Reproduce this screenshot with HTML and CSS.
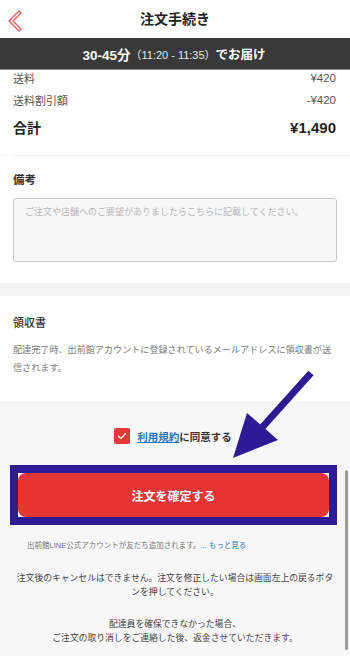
FILE: index.html
```html
<!DOCTYPE html>
<html lang="ja">
<head>
<meta charset="utf-8">
<link rel="stylesheet" href="styles.css">
</head>
<body>
<div class="page">
  <header class="topbar">
    <svg class="back" width="24" height="38" viewBox="0 0 24 38"><polygon points="17,11 19,13 11,21 19,29 17,31 7,21" fill="none" stroke="#e05a5a" stroke-width="1.2" stroke-linejoin="round"/></svg>
    <h1>注文手続き</h1>
  </header>
  <div class="eta"><b>30-45分</b><span>（11:20 - 11:35）</span><b>でお届け</b></div>
  <section class="summary">
    <div class="row r1"><span>送料</span><span>¥420</span></div>
    <div class="row r2"><span>送料割引額</span><span>-¥420</span></div>
    <div class="row total"><span>合計</span><span>¥1,490</span></div>
  </section>
  <div class="divider"></div>
  <section class="notes">
    <h2>備考</h2>
    <div class="textarea">ご注文や店舗へのご要望がありましたらこちらに記載してください。</div>
  </section>
  <div class="band"></div>
  <section class="receipt">
    <h2>領収書</h2>
    <p>配達完了時、出前館アカウントに登録されているメールアドレスに領収書が送信されます。</p>
  </section>
  <section class="confirm">
    <div class="agree">
      <span class="check"><svg width="16" height="16" viewBox="0 0 16 16"><path d="M4.5 8.2 L7 10.5 L11.5 5.5" fill="none" stroke="#fff" stroke-width="1.4" stroke-linecap="round" stroke-linejoin="round"/></svg></span>
      <a class="terms">利用規約</a><span>に同意する</span>
    </div>
    <div class="highlight">
      <div class="btn">注文を確定する</div>
    </div>
    <p class="line">出前館LINE公式アカウントが友だち追加されます。<span class="more">... もっと見る</span></p>
    <p class="info">注文後のキャンセルはできません。注文を修正したい場合は画面左上の戻るボタンを押してください。</p>
    <p class="info second">配達員を確保できなかった場合、<br>ご注文の取り消しをご連絡した後、返金させていただきます。</p>
  </section>
  <svg class="arrow" width="350" height="656" viewBox="0 0 350 656">
    <line x1="311" y1="373" x2="258" y2="432" stroke="#2f1a96" stroke-width="7"/>
    <polygon points="233,458 247,413 278,440" fill="#2f1a96"/>
  </svg>
  <div class="scrollbar"></div>
</div>
</body>
</html>
```
FILE: styles.css
```css
* { box-sizing: border-box; margin: 0; padding: 0; }
html, body { width: 350px; height: 656px; overflow: hidden; }
body {
  font-family: "Liberation Sans", "Noto Sans CJK JP", sans-serif;
  color: #333;
  background: #f7f7f7;
}
.page { position: relative; width: 350px; height: 656px; overflow: hidden; }
.topbar {
  height: 38px;
  background: #fff;
  display: flex;
  align-items: center;
  justify-content: center;
  position: relative;
}
.back { position: absolute; left: 2px; top: 0; }
.topbar h1 { font-size: 14px; font-weight: 700; color: #222; line-height: 38px; }
.eta {
  height: 32px;
  background: #393939;
  border-bottom: 1px solid #8a8a8a;
  color: #fff;
  display: flex;
  align-items: center;
  justify-content: center;
  padding-right: 2px;
}
.eta b { font-weight: 700; font-size: 12.5px; }
.eta b:first-child { font-size: 13.5px; }
.eta span { font-size: 11px; font-weight: 400; color: #e8e8e8; }
.summary { background: #fff; padding: 0 14px 18px 13px; }
.row { display: flex; justify-content: space-between; align-items: center; font-size: 11px; color: #555; }
.row span:last-child { font-size: 11.5px; }
.r1 { height: 15px; }
.r2 { height: 16px; margin-top: 7px; }
.total { height: 20px; margin-top: 9px; font-size: 14px; font-weight: 700; color: #222; }
.total span:last-child { font-size: 15px; }
.divider { height: 1px; background: #ececec; margin-left: 13px; }
.notes { background: #fff; padding: 14px 13px 21px 13px; }
.notes h2 { font-size: 11.5px; font-weight: 700; line-height: 20px; color: #333; }
.textarea {
  margin-top: 8px;
  height: 64px;
  width: 324px;
  background: #f7f7f7;
  border: 1px solid #c9c9c9;
  border-radius: 3px;
  padding: 6px 11px;
  font-size: 9px;
  color: #b5b5b5;
  line-height: 14px;
}
.band { height: 13px; background: #f5f5f5; }
.receipt { background: #fff; padding: 17px 13px 24px 13px; }
.receipt h2 { font-size: 11px; font-weight: 500; line-height: 20px; color: #333; }
.receipt p { margin-top: 8px; font-size: 9.1px; line-height: 18px; color: #7a7a7a; }
.confirm { background: #f7f7f7; padding-top: 27px; }
.agree {
  height: 16px;
  display: flex;
  align-items: center;
  justify-content: center;
  font-size: 10.5px;
  font-weight: 700;
  color: #333;
  padding-right: 4px;
}
.check {
  width: 16px; height: 16px;
  background: #e53935;
  border-radius: 2px;
  margin-right: 7px;
  display: flex;
}
.terms { color: #2a78c2; text-decoration: underline; }
.highlight {
  margin: 21px 0 0 10px;
  width: 327px;
  height: 60px;
  border: 8px solid #2f1a96;
  background: #fff;
}
.btn {
  height: 100%;
  background: #e53535;
  border-radius: 8px;
  color: #fff;
  font-size: 12px;
  font-weight: 700;
  display: flex;
  align-items: center;
  justify-content: center;
}
.line {
  margin-top: 14px;
  padding-left: 27px;
  font-size: 7.5px;
  line-height: 14px;
  color: #777;
}
.more { color: #2a78c2; }
.info {
  margin-top: 19px;
  text-align: center;
  font-size: 8.8px;
  line-height: 13.5px;
  color: #444;
  padding: 0 14px;
}
.info.second { margin-top: 19px; }
.arrow { position: absolute; left: 0; top: 0; pointer-events: none; }
.scrollbar {
  position: absolute;
  left: 345px;
  top: 470px;
  width: 2.5px;
  height: 180px;
  border-radius: 2px;
  background: #9a9a9a;
}
```
